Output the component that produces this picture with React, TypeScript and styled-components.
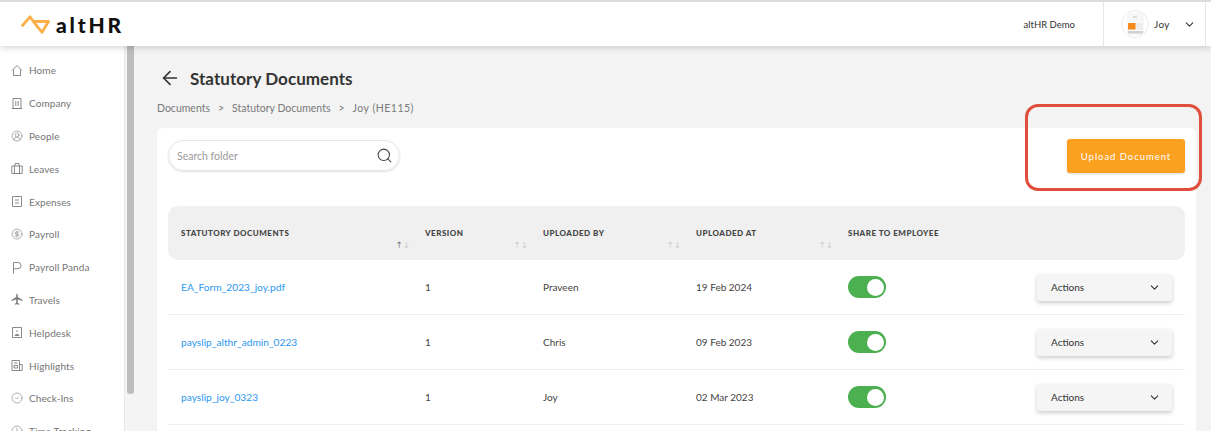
import { ReactNode } from "react";
import styled, { createGlobalStyle } from "styled-components";
import { ArrowLeft, ChevronDown, CircleCheck, CircleDollarSign, CircleUserRound, Clock, Search } from "lucide-react";

const FONT = `Lato, "Open Sans", "Liberation Sans", sans-serif`;

const GlobalStyle = createGlobalStyle`
  html, body {
    margin: 0;
    height: 431px;
    overflow: hidden;
    background: #f3f3f3;
    font-family: ${FONT};
  }
  * { box-sizing: border-box; }
`;

const Page = styled.div`
  width: 1211px;
  height: 431px;
  overflow: hidden;
  position: relative;
  display: flex;
  flex-direction: column;
  border-top: 2px solid #dcdcdc;
`;

const Header = styled.header`
  height: 44px;
  flex: none;
  display: flex;
  align-items: center;
  background: #fff;
  box-shadow: 0 2px 6px rgba(0, 0, 0, 0.16);
  position: relative;
  z-index: 2;
  padding-left: 21px;
`;

const Logo = styled.div`
  display: flex;
  align-items: center;
  gap: 6px;
`;

const LogoWord = styled.span`
  font-size: 21px;
  font-weight: 900;
  letter-spacing: 2.8px;
  line-height: 1;
  color: #111;
`;

const HeaderRight = styled.div`
  margin-left: auto;
  display: flex;
  align-items: stretch;
  height: 100%;
`;

const Org = styled.div`
  display: flex;
  align-items: center;
  padding-right: 28px;
  font-size: 9.5px;
  color: #333;
  border-right: 1px solid #e6e6e6;
`;

const UserBox = styled.div`
  width: 102px;
  display: flex;
  align-items: center;
  padding-left: 17px;
  border-right: 1px solid #e6e6e6;
  margin-right: 5px;
  font-size: 10px;
  letter-spacing: 0.4px;
  color: #333;
`;

const Avatar = styled.svg`
  width: 28px;
  height: 28px;
  flex: none;
  margin-right: 5px;
`;

const UserChevron = styled(ChevronDown)`
  margin-left: 13px;
`;

const Body = styled.div`
  flex: 1;
  display: flex;
  min-height: 0;
`;

const Sidebar = styled.nav`
  width: 125px;
  flex: none;
  background: #fff;
  border-right: 1px solid #e8e8e8;
  padding: 8px 0 0 11px;
  display: flex;
  flex-direction: column;
`;

const NavItem = styled.div`
  height: 32.8px;
  flex: none;
  display: flex;
  align-items: center;
  gap: 6px;
  font-size: 10px;
  letter-spacing: 0.1px;
  color: #757575;
  svg {
    flex: none;
    color: #7d7d7d;
  }
`;

const Track = styled.div`
  width: 11px;
  flex: none;
  background: #f4f4f4;
  padding: 0 2px;
`;

const Thumb = styled.div`
  height: 348px;
  background: #bdbdbd;
  border-radius: 0 0 3px 3px;
`;

const Main = styled.main`
  flex: 1;
  background: #f3f3f3;
  padding: 20px 15px 0 21px;
  min-width: 0;
  display: flex;
  flex-direction: column;
`;

const TitleRow = styled.div`
  display: flex;
  align-items: center;
  gap: 9px;
  padding-left: 2px;
  height: 24px;
  color: #333;
`;

const Title = styled.h1`
  margin: 0;
  font-size: 17px;
  font-weight: 700;
  letter-spacing: 0.05px;
  color: #333;
`;

const Crumbs = styled.div`
  display: flex;
  gap: 8px;
  margin-top: 11px;
  font-size: 10.5px;
  color: #7a7a7a;
  height: 14px;
  align-items: center;
`;

const CrumbLast = styled.span`
  letter-spacing: 0.5px;
`;

const Card = styled.section`
  flex: 1;
  margin-top: 13px;
  background: #fff;
  border-radius: 6px 6px 0 0;
  padding: 11px 11px 0;
`;

const Toolbar = styled.div`
  display: flex;
  align-items: flex-start;
  justify-content: space-between;
  height: 32px;
`;

const SearchBox = styled.div`
  width: 232px;
  height: 31px;
  margin-top: 1px;
  display: flex;
  align-items: center;
  justify-content: space-between;
  padding: 0 6px 0 8px;
  border: 1px solid #e6e6e9;
  border-radius: 16px;
  box-shadow: 0 1px 2px rgba(0, 0, 0, 0.12);
  font-size: 10.5px;
  color: #9a9a9a;
  svg {
    color: #444;
  }
`;

const UploadButton = styled.button`
  width: 118px;
  height: 34px;
  border: none;
  border-radius: 3px;
  background: #fca01f;
  color: #fff;
  font-family: ${FONT};
  font-size: 9.5px;
  letter-spacing: 0.95px;
  box-shadow: 0 1px 2px rgba(0, 0, 0, 0.15);
`;

const columns = "244px 118px 153px 152px 189px 1fr";

const HeadRow = styled.div`
  margin-top: 35px;
  height: 54px;
  display: grid;
  grid-template-columns: ${columns};
  background: #f0f0f0;
  border-radius: 10px;
  padding-left: 13px;
`;

const HeadCell = styled.div`
  position: relative;
  padding-top: 22px;
  font-size: 8px;
  font-weight: 900;
  letter-spacing: 0.5px;
  text-transform: uppercase;
  color: #444;
`;

const SortMark = styled.span`
  position: absolute;
  right: 16px;
  top: 35px;
  display: flex;
  gap: 2px;
  font-size: 7px;
  line-height: 1;
  font-weight: 400;
  letter-spacing: 0;
`;

const Arrow = styled.span<{ $on?: boolean }>`
  color: ${(p) => (p.$on ? "#555" : "#c4c4c4")};
`;

const Row = styled.div`
  height: 55px;
  display: grid;
  grid-template-columns: ${columns};
  align-items: center;
  padding-left: 13px;
  border-bottom: 1px solid #f0f0f0;
  font-size: 10px;
  color: #444;
`;

const FileLink = styled.a`
  color: #2b98f0;
  font-size: 10.2px;
`;

const Toggle = styled.span`
  display: flex;
  justify-content: flex-end;
  align-items: center;
  width: 38px;
  height: 22px;
  padding-right: 2px;
  border-radius: 11px;
  background: #4caf50;
  &::after {
    content: "";
    width: 17px;
    height: 17px;
    border-radius: 50%;
    background: #fff;
  }
`;

const ActionsButton = styled.div`
  width: 135px;
  height: 27px;
  display: flex;
  align-items: center;
  justify-content: space-between;
  padding: 0 11px 0 14px;
  background: #f5f5f5;
  border-radius: 3px;
  box-shadow: 0 2px 4px rgba(0, 0, 0, 0.2);
  font-size: 10px;
  color: #333;
`;

const Highlight = styled.div`
  position: absolute;
  left: 1025px;
  top: 102px;
  width: 177px;
  height: 87px;
  border: 3px solid #e04f3c;
  border-radius: 13px;
  z-index: 3;
`;

const NavIcon = ({ children }: { children: ReactNode }) => (
  <svg width="12" height="13" viewBox="0 0 12 13" fill="none" stroke="currentColor" strokeWidth="0.9">
    {children}
  </svg>
);

const navItems: { label: string; icon: ReactNode }[] = [
  { label: "Home", icon: <NavIcon><path d="M1 6.5 6 1.5l5 5M2.5 5.5v6h7v-6" /></NavIcon> },
  { label: "Company", icon: <NavIcon><path d="M2 1.5h8v10H2zM.8 11.5h10.4M4.8 4v5M7.2 4v5" /></NavIcon> },
  { label: "People", icon: <CircleUserRound size={12} strokeWidth={1.2} /> },
  { label: "Leaves", icon: <NavIcon><path d="M.8 4h10.4v7.5H.8zM4 4V1.5h4V4M3.5 4v7.5M8.5 4v7.5" /></NavIcon> },
  { label: "Expenses", icon: <NavIcon><path d="M1.5 1.5h9v10h-9zM4 5h4M4 8h4" /></NavIcon> },
  { label: "Payroll", icon: <CircleDollarSign size={12} strokeWidth={1.2} /> },
  { label: "Payroll Panda", icon: <NavIcon><path d="M2.5 12.5V1.5H7a3 3 0 0 1 0 6.2H2.5" /></NavIcon> },
  {
    label: "Travels",
    icon: (
      <NavIcon>
        <path d="M6 .5c.6 0 .8 1.2.8 3.5l4.7 3v1L6.8 6.6v3.2l1.4 1.2v.8L6 11.2l-2.2.6V11l1.4-1.2V6.6L.5 8V7l4.7-3C5.200 1.700 5.400.5 6 .5z" fill="currentColor" stroke="none" />
      </NavIcon>
    ),
  },
  { label: "Helpdesk", icon: <NavIcon><path d="M1.500 1.500h9v10h-9zM4 9.500c0-1.500 4-1.500 4 0zM6 4.200v2" /></NavIcon> },
  { label: "Highlights", icon: <NavIcon><path d="M1 1.500h7.500v10H1zM8.500 5.500h2.700v6H8.500M3 4h3.500M3 6.500h3.500v2.500H3z" /></NavIcon> },
  { label: "Check-Ins", icon: <CircleCheck size={12} strokeWidth={1.2} /> },
  { label: "Time Tracking", icon: <Clock size={12} strokeWidth={1.2} /> },
];

const docs = [
  { file: "EA_Form_2023_joy.pdf", by: "Praveen", at: "19 Feb 2024" },
  { file: "payslip_althr_admin_0223", by: "Chris", at: "09 Feb 2023" },
  { file: "payslip_joy_0323", by: "Joy", at: "02 Mar 2023" },
];

const heads = ["Statutory Documents", "Version", "Uploaded By", "Uploaded At", "Share to Employee"];

export default function App() {
  return (
    <>
      <GlobalStyle />
      <Page>
        <Header>
          <Logo>
            <svg width="29" height="19" viewBox="0 0 29 19" fill="none" stroke="#fbb04a" strokeWidth="2.8" strokeLinejoin="round" strokeLinecap="round">
              <path d="M1.500 10.500 9 1.800l7.500 10" />
              <path d="M14.500 6.500H27.500L21 17.200l-4.500-5.400" />
            </svg>
            <LogoWord>altHR</LogoWord>
          </Logo>
          <HeaderRight>
            <Org>altHR Demo</Org>
            <UserBox>
              <Avatar viewBox="0 0 28 28">
                <circle cx="14" cy="14" r="13.500" fill="#fff" stroke="#ececec" />
                <rect x="6" y="3" width="17" height="22" fill="#f7f7f7" />
                <rect x="12" y="6" width="4" height="2" fill="#ddd" />
                <rect x="7" y="13" width="7.500" height="6.500" fill="#f58a1f" />
                <rect x="15" y="13" width="7" height="6.500" fill="#eee" />
                <rect x="7" y="21" width="15" height="2.500" fill="#d2d2d2" />
              </Avatar>
              Joy
              <UserChevron size={13} strokeWidth={2} />
            </UserBox>
          </HeaderRight>
        </Header>
        <Body>
          <Sidebar>
            {navItems.map((item) => (
              <NavItem key={item.label}>
                {item.icon}
                {item.label}
              </NavItem>
            ))}
          </Sidebar>
          <Track>
            <Thumb />
          </Track>
          <Main>
            <TitleRow>
              <ArrowLeft size={22} strokeWidth={1.8} />
              <Title>Statutory Documents</Title>
            </TitleRow>
            <Crumbs>
              <span>Documents</span>
              <span>&gt;</span>
              <span>Statutory Documents</span>
              <span>&gt;</span>
              <CrumbLast>Joy (HE115)</CrumbLast>
            </Crumbs>
            <Card>
              <Toolbar>
                <SearchBox>
                  Search folder
                  <Search size={17} strokeWidth={1.5} />
                </SearchBox>
                <UploadButton>Upload Document</UploadButton>
              </Toolbar>
              <HeadRow>
                {heads.map((h, i) => (
                  <HeadCell key={h}>
                    {h}
                    {i < 4 && (
                      <SortMark>
                        <Arrow $on={i === 0}>↑</Arrow>
                        <Arrow>↓</Arrow>
                      </SortMark>
                    )}
                  </HeadCell>
                ))}
              </HeadRow>
              {docs.map((d) => (
                <Row key={d.file}>
                  <FileLink>{d.file}</FileLink>
                  <span>1</span>
                  <span>{d.by}</span>
                  <span>{d.at}</span>
                  <Toggle />
                  <ActionsButton>
                    Actions
                    <ChevronDown size={13} strokeWidth={2} />
                  </ActionsButton>
                </Row>
              ))}
            </Card>
          </Main>
        </Body>
        <Highlight />
      </Page>
    </>
  );
}
